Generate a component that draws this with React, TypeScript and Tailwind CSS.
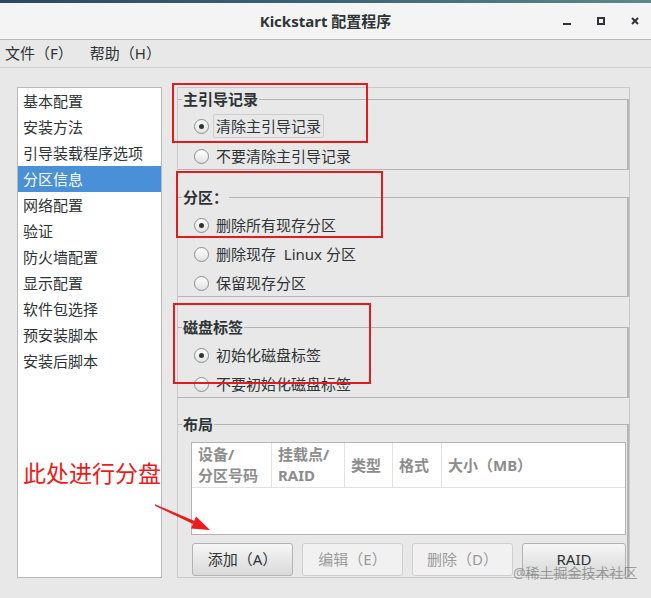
import React from 'react';

const NAV_ITEMS = [
  '基本配置',
  '安装方法',
  '引导装载程序选项',
  '分区信息',
  '网络配置',
  '验证',
  '防火墙配置',
  '显示配置',
  '软件包选择',
  '预安装脚本',
  '安装后脚本',
];

interface RadioProps {
  label: string;
  checked?: boolean;
  focused?: boolean;
}

const Radio: React.FC<RadioProps> = ({ label, checked, focused }) => (
  <div className="flex items-center h-[26px] pl-[16px]">
    <span className="w-[15px] h-[15px] shrink-0 rounded-full border border-[#8e8e8e] bg-gradient-to-b from-white to-[#e2e2e2] flex items-center justify-center">
      {checked && <span className="w-[5px] h-[5px] rounded-full bg-[#2e3436]" />}
    </span>
    {focused ? (
      <span className="ml-[4px] px-[2px] leading-[22px] border border-[#cdcdcd] rounded-[2px] whitespace-pre">{label}</span>
    ) : (
      <span className="ml-[7px] whitespace-pre">{label}</span>
    )}
  </div>
);

const Section: React.FC<{ title: string; className?: string; children: React.ReactNode }> = ({
  title,
  className = '',
  children,
}) => (
  <fieldset className={`border-t border-r-2 border-b border-l-0 border-[#b4b4b4] ${className}`}>
    <legend className="ml-[4px] px-[1px] font-bold leading-[22px]">{title}</legend>
    {children}
  </fieldset>
);

const Button: React.FC<{ label: string; disabled?: boolean; className?: string }> = ({
  label,
  disabled,
  className = 'w-[101px]',
}) => (
  <button
    className={
      disabled
        ? `h-[33px] ${className} rounded-[3px] border border-[#cfcfcf] bg-[#f1f1f1] text-[#9a9a9a]`
        : `h-[33px] ${className} rounded-[3px] border border-[#b3b3b3] bg-gradient-to-b from-[#f6f6f6] to-[#dadada] text-[#2e3436]`
    }
  >
    {label}
  </button>
);

export default function App() {
  return (
    <div className="relative w-[651px] h-[598px] overflow-hidden bg-[#e8e8e8] text-[15px] text-[#2e3436] font-['Noto_Sans','Noto_Sans_CJK_SC',sans-serif]">
      {/* desktop strip */}
      <div className="h-[3px] bg-gradient-to-r from-[#2c4763] via-[#3b6474] to-[#5a8a88]" />

      {/* title bar */}
      <div className="h-[37px] grid grid-cols-[1fr_auto_1fr] items-center bg-[#f4f4f4] border-b border-[#b9b9b9]">
        <div />
        <div className="font-bold leading-none">Kickstart 配置程序</div>
        <div className="flex items-center justify-end gap-[26px] pr-[12px]">
          <span className="w-[8px] h-[2px] mt-[6px] bg-[#2e3436]" />
          <span className="w-[8px] h-[8px] border-2 border-[#2e3436]" />
          <svg className="w-[8px] h-[8px]" viewBox="0 0 8 8" fill="none" stroke="#2e3436" strokeWidth={2}>
            <path d="M1 1l6 6M7 1L1 7" />
          </svg>
        </div>
      </div>

      {/* menu bar */}
      <div className="h-[28px] flex items-center pl-[5px] border-b border-[#cfcfcf]">
        <span>文件（F）</span>
        <span className="ml-[17px]">帮助（H）</span>
      </div>

      {/* content */}
      <div className="flex items-stretch pt-[19px] pl-[17px] gap-[15px]">
        <div className="w-[145px] bg-white border border-[#b9b9b9]">
          {NAV_ITEMS.map((item) => (
            <div
              key={item}
              className={
                item === '分区信息'
                  ? 'h-[26px] flex items-center pl-[5px] bg-[#4a90d9] text-white'
                  : 'h-[26px] flex items-center pl-[5px]'
              }
            >
              {item}
            </div>
          ))}
        </div>

        <div className="w-[453px] flex flex-col border border-[#c9c9c9]">
          <Section title="主引导记录">
            <div className="flex flex-col gap-[4px] pt-[3px]">
              <Radio label="清除主引导记录" checked focused />
              <Radio label="不要清除主引导记录" />
            </div>
          </Section>

          <Section title="分区：" className="mt-[16px]">
            <div className="flex flex-col gap-[3px] pt-[4px]">
              <Radio label="删除所有现存分区" checked />
              <Radio label="删除现存  Linux 分区" />
              <Radio label="保留现存分区" />
            </div>
          </Section>

          <Section title="磁盘标签" className="mt-[19px]">
            <div className="flex flex-col gap-[3px] pt-[4px]">
              <Radio label="初始化磁盘标签" checked />
              <Radio label="不要初始化磁盘标签" />
            </div>
          </Section>

          <Section title="布局" className="mt-[15px] border-b-0">
            <div className="pl-[13px] pr-[1px] pt-[7px] pb-[1px]">
              <div className="h-[93px] bg-white border border-[#b4b4b4] flex flex-col">
                <div className="h-[45px] flex border-b border-[#e2e2e2] font-bold text-[#8d8d8d] leading-[21px]">
                  <div className="w-[80px] px-[6px] flex flex-col justify-center border-r border-[#e2e2e2]">
                    <span>设备/</span>
                    <span>分区号码</span>
                  </div>
                  <div className="w-[73px] px-[6px] flex flex-col justify-center border-r border-[#e2e2e2]">
                    <span>挂载点/</span>
                    <span>RAID</span>
                  </div>
                  <div className="w-[48px] px-[6px] flex items-center border-r border-[#e2e2e2]">类型</div>
                  <div className="w-[49px] px-[6px] flex items-center border-r border-[#e2e2e2]">格式</div>
                  <div className="flex-1 px-[6px] flex items-center">大小（MB）</div>
                </div>
              </div>
              <div className="flex gap-[9px] mt-[8px] pl-[1px]">
                <Button label="添加（A）" />
                <Button label="编辑（E）" disabled />
                <Button label="删除（D）" disabled />
                <Button label="RAID" className="w-[104px]" />
              </div>
            </div>
          </Section>
        </div>
      </div>

      {/* annotations */}
      <div className="absolute left-[172px] top-[83px] w-[196px] h-[60px] border-2 border-[#e21c1c]" />
      <div className="absolute left-[176px] top-[171px] w-[207px] h-[67px] border-2 border-[#e21c1c]" />
      <div className="absolute left-[173px] top-[303px] w-[198px] h-[81px] border-2 border-[#e21c1c]" />
      <div className="absolute left-[23px] top-[460px] text-[23px] leading-[26px] text-[#ee1a1a]">此处进行分盘</div>
      <svg className="absolute left-[150px] top-[498px] w-[66px] h-[38px]" viewBox="0 0 66 38">
        <polygon points="5,6.2 5,7.8 43,26 44.5,23" fill="#ee1a1a" />
        <polygon points="60,32 41,30.5 46,18.5" fill="#ee1a1a" />
      </svg>
      <div className="absolute left-[513px] top-[564px] text-[14px] leading-[18px] text-[rgba(105,105,105,0.6)]">
        @稀土掘金技术社区
      </div>
    </div>
  );
}
